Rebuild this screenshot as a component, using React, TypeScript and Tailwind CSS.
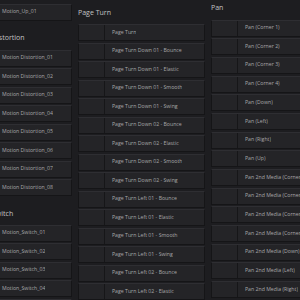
const col1 = [
  { title: null, items: ['Motion_Up_01'] },
  {
    title: 'Distortion',
    items: [
      'Motion Distortion_01',
      'Motion Distortion_02',
      'Motion Distortion_03',
      'Motion Distortion_04',
      'Motion Distortion_05',
      'Motion Distortion_06',
      'Motion Distortion_07',
      'Motion Distortion_08',
    ],
  },
  {
    title: 'Switch',
    items: ['Motion_Switch_01', 'Motion_Switch_02', 'Motion_Switch_03', 'Motion_Switch_04', 'Motion_Switch_05'],
  },
]

const pageTurn = [
  'Page Turn',
  'Page Turn Down 01 - Bounce',
  'Page Turn Down 01 - Elastic',
  'Page Turn Down 01 - Smooth',
  'Page Turn Down 01 - Swing',
  'Page Turn Down 02 - Bounce',
  'Page Turn Down 02 - Elastic',
  'Page Turn Down 02 - Smooth',
  'Page Turn Down 02 - Swing',
  'Page Turn Left 01 - Bounce',
  'Page Turn Left 01 - Elastic',
  'Page Turn Left 01 - Smooth',
  'Page Turn Left 01 - Swing',
  'Page Turn Left 02 - Bounce',
  'Page Turn Left 02 - Elastic',
  'Page Turn Left 02 - Smooth',
]

const pan = [
  'Pan (Corner 1)',
  'Pan (Corner 2)',
  'Pan (Corner 3)',
  'Pan (Corner 4)',
  'Pan (Down)',
  'Pan (Left)',
  'Pan (Right)',
  'Pan (Up)',
  'Pan 2nd Media (Corner 1)',
  'Pan 2nd Media (Corner 2)',
  'Pan 2nd Media (Corner 3)',
  'Pan 2nd Media (Corner 4)',
  'Pan 2nd Media (Down)',
  'Pan 2nd Media (Left)',
  'Pan 2nd Media (Right)',
  'Pan 2nd Media (Up)',
]

function Header({ text }: { text: string }) {
  return (
    <div className="h-[22px] shrink-0 flex items-center text-[7px] text-[#c2c2c4] whitespace-nowrap">{text}</div>
  )
}

function Item({ label, thumb = true }: { label: string; thumb?: boolean }) {
  return (
    <div className="h-[17px] flex shrink-0 bg-[#242427] border border-[#151517] border-t-[#2e2e32] rounded-[1px]">
      {thumb && <div className="w-[26px] shrink-0 border-r border-[#161618]" />}
      <div className={`flex items-center text-[5.2px] text-[#a8a8aa] whitespace-nowrap overflow-hidden ${thumb ? 'pl-[7px]' : 'pl-[9px]'}`}>
        {label}
      </div>
    </div>
  )
}

export default function App() {
  return (
    <div
      className="w-[300px] h-[300px] overflow-hidden bg-[#1d1d20] flex items-start gap-[6px]"
      style={{ fontFamily: '"Open Sans", "Noto Sans", sans-serif' }}
    >
      {/* left column, scrolled off to the left */}
      <div className="w-[80px] ml-[-8px] shrink-0 pt-[3.8px]">
        {col1.map((g, gi) => (
          <div key={gi} className={gi > 0 ? 'mt-[6.8px]' : ''}>
            {g.title && <Header text={g.title} />}
            <div className="flex flex-col gap-[1.5px]">
              {g.items.map((it) => (
                <Item key={it} label={it} thumb={false} />
              ))}
            </div>
          </div>
        ))}
      </div>

      <div className="w-[127px] shrink-0 pt-[2.3px]">
        <Header text="Page Turn" />
        <div className="flex flex-col gap-[1.5px]">
          {pageTurn.map((it) => (
            <Item key={it} label={it} />
          ))}
        </div>
      </div>

      <div className="w-[127px] shrink-0 mt-[-2.5px]">
        <Header text="Pan" />
        <div className="flex flex-col gap-[1.7px]">
          {pan.map((it) => (
            <Item key={it} label={it} />
          ))}
        </div>
      </div>
    </div>
  )
}
